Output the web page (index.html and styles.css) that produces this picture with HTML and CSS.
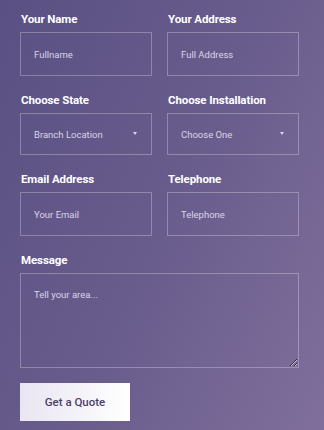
FILE: index.html
```html
<!DOCTYPE html>
<html lang="en">

<head>
    <meta charset="UTF-8">
    <meta name="viewport" content="width=device-width, initial-scale=1.0">
    <title>Quote</title>
    <link rel="stylesheet" href="styles.css">
</head>

<body>
    <form class="quote">
        <div class="field">
            <label>Your Name</label>
            <input type="text" placeholder="Fullname">
        </div>
        <div class="field">
            <label>Your Address</label>
            <input type="text" placeholder="Full Address">
        </div>
        <div class="field">
            <label>Choose State</label>
            <div class="select">
                <select>
                    <option>Branch Location</option>
                </select>
            </div>
        </div>
        <div class="field">
            <label>Choose Installation</label>
            <div class="select">
                <select>
                    <option>Choose One</option>
                </select>
            </div>
        </div>
        <div class="field">
            <label>Email Address</label>
            <input type="text" placeholder="Your Email">
        </div>
        <div class="field">
            <label>Telephone</label>
            <input type="text" placeholder="Telephone">
        </div>
        <div class="field wide">
            <label>Message</label>
            <textarea placeholder="Tell your area..."></textarea>
        </div>
        <div class="wide">
            <button type="button" class="btn">Get a Quote</button>
        </div>
    </form>
</body>

</html>
```

FILE: styles.css
```css
* {
    margin: 0;
    padding: 0;
    box-sizing: border-box;
}

html,
body {
    height: 100%;
}

body {
    background: linear-gradient(115deg, #5a5083 0%, #685c8c 50%, #806f9c 100%);
    font-family: Roboto, "Noto Sans", sans-serif;
    overflow: hidden;
}

.quote {
    display: grid;
    grid-template-columns: 132px 132px;
    column-gap: 15px;
    row-gap: 16px;
    padding: 11px 0 0 20px;
}

.wide {
    grid-column: 1 / 3;
}

.field label {
    display: block;
    color: #fff;
    font-size: 11.5px;
    font-weight: 700;
    line-height: 16px;
    margin-bottom: 5px;
    padding-left: 1px;
    letter-spacing: -0.1px;
}

input,
select,
textarea {
    display: block;
    width: 100%;
    background: transparent;
    border: 1px solid rgba(255, 255, 255, 0.28);
    color: #e4def0;
    font-family: Roboto, "Noto Sans", sans-serif;
    font-size: 9.5px;
    padding: 0 13px;
    outline: none;
    border-radius: 0;
}

input {
    height: 44px;
}

input::placeholder,
textarea::placeholder {
    color: #dbd4ea;
}

.select {
    position: relative;
}

select {
    height: 42px;
    appearance: none;
    -webkit-appearance: none;
    color: #dbd4ea;
}

.select::after {
    content: "";
    position: absolute;
    right: 15px;
    top: 19px;
    border-left: 2.5px solid transparent;
    border-right: 2.5px solid transparent;
    border-top: 3px solid #dbd4ea;
}

textarea {
    height: 95px;
    padding-top: 14px;
    resize: vertical;
    line-height: 14px;
}

.btn {
    margin-top: -1px;
    width: 110px;
    height: 38px;
    border: none;
    background: linear-gradient(90deg, #e9e5f2, #ffffff);
    color: #4a3f69;
    font-family: Roboto, "Noto Sans", sans-serif;
    font-size: 11.5px;
    font-weight: 500;
    cursor: pointer;
}
```
